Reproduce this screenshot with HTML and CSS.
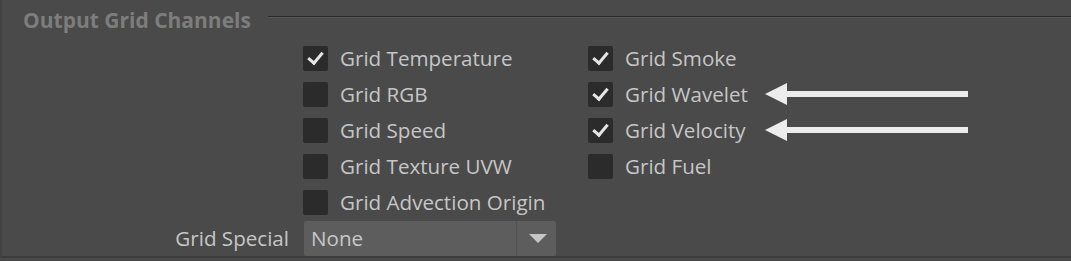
FILE: index.html
```html
<!DOCTYPE html>
<html lang="en">
<head>
    <meta charset="UTF-8">
    <title>Output Grid Channels</title>
    <link rel="stylesheet" href="styles.css">
</head>
<body>
    <div class="panel">
        <div class="section-head">
            <span class="section-title">Output Grid Channels</span>
            <span class="section-rule"></span>
        </div>
        <div class="channels">
            <div class="channel-col">
                <label class="check on"><span class="box"></span>Grid Temperature</label>
                <label class="check"><span class="box"></span>Grid RGB</label>
                <label class="check"><span class="box"></span>Grid Speed</label>
                <label class="check"><span class="box"></span>Grid Texture UVW</label>
                <label class="check"><span class="box"></span>Grid Advection Origin</label>
            </div>
            <div class="channel-col">
                <label class="check on"><span class="box"></span>Grid Smoke</label>
                <label class="check on"><span class="box"></span>Grid Wavelet<span class="pointer"></span></label>
                <label class="check on"><span class="box"></span>Grid Velocity<span class="pointer"></span></label>
                <label class="check"><span class="box"></span>Grid Fuel</label>
            </div>
        </div>
        <div class="field">
            <span class="field-label">Grid Special</span>
            <div class="select">
                <span class="select-value">None</span>
                <span class="select-btn"></span>
            </div>
        </div>
    </div>
</body>
</html>
```

FILE: styles.css
```css
html, body {
    margin: 0;
    padding: 0;
    background: #4a4a4a;
}
body {
    width: 1071px;
    height: 261px;
    overflow: hidden;
    font-family: 'Open Sans', 'Noto Sans', sans-serif;
}
.panel {
    height: 258px;
    border-left: 2px solid #424242;
    border-bottom: 2px solid #3c3c3c;
    box-sizing: border-box;
    padding: 5px 0 0 21px;
}
.section-head {
    display: flex;
    align-items: center;
    gap: 17px;
    height: 30px;
}
.section-title {
    color: #7d7d7d;
    font-weight: 700;
    font-size: 21px;
    white-space: nowrap;
}
.section-rule {
    flex: 1;
    height: 1px;
    background: #2a2a2a;
    border-bottom: 1px solid #565656;
    margin-top: -6px;
}
.channels {
    display: flex;
    padding-left: 280px;
    gap: 65px;
    margin-top: 5px;
}
.channel-col {
    display: flex;
    flex-direction: column;
    width: 220px;
    flex-shrink: 0;
}
.channel-col + .channel-col {
    width: auto;
}
.check {
    display: flex;
    align-items: center;
    height: 36px;
    color: #c6c6c6;
    font-size: 20.6px;
    white-space: nowrap;
    position: relative;
}
.box {
    flex-shrink: 0;
    width: 25px;
    height: 25px;
    border-radius: 2px;
    background: #2b2b2b;
    margin-right: 12px;
    position: relative;
}
.check.on .box::after {
    content: "";
    position: absolute;
    left: 8px;
    top: 3px;
    width: 6px;
    height: 12px;
    border-right: 3px solid #e6e6e6;
    border-bottom: 3px solid #e6e6e6;
    transform: rotate(40deg);
}
.pointer {
    position: absolute;
    left: 177px;
    top: 7px;
    width: 203px;
    height: 22px;
}
.pointer::before {
    content: "";
    position: absolute;
    left: 0;
    top: 0;
    border-top: 11px solid transparent;
    border-bottom: 11px solid transparent;
    border-right: 22px solid #ececec;
}
.pointer::after {
    content: "";
    position: absolute;
    left: 20px;
    right: 0;
    top: 8px;
    height: 6px;
    background: #ececec;
}
.field {
    display: flex;
    align-items: center;
    height: 36px;
}
.field-label {
    width: 266px;
    text-align: right;
    color: #c6c6c6;
    font-size: 20.6px;
    white-space: nowrap;
    margin-right: 15px;
}
.select {
    display: flex;
    width: 252px;
    height: 35px;
    background: #5d5d5d;
    border-radius: 2px;
}
.select-value {
    flex: 1;
    color: #c8c8c8;
    font-size: 20.6px;
    line-height: 35px;
    padding-left: 7px;
    border-right: 1px solid #525252;
}
.select-btn {
    width: 39px;
    position: relative;
}
.select-btn::after {
    content: "";
    position: absolute;
    left: 12px;
    top: 13px;
    border-left: 9px solid transparent;
    border-right: 9px solid transparent;
    border-top: 9px solid #c6c6c6;
}
```
